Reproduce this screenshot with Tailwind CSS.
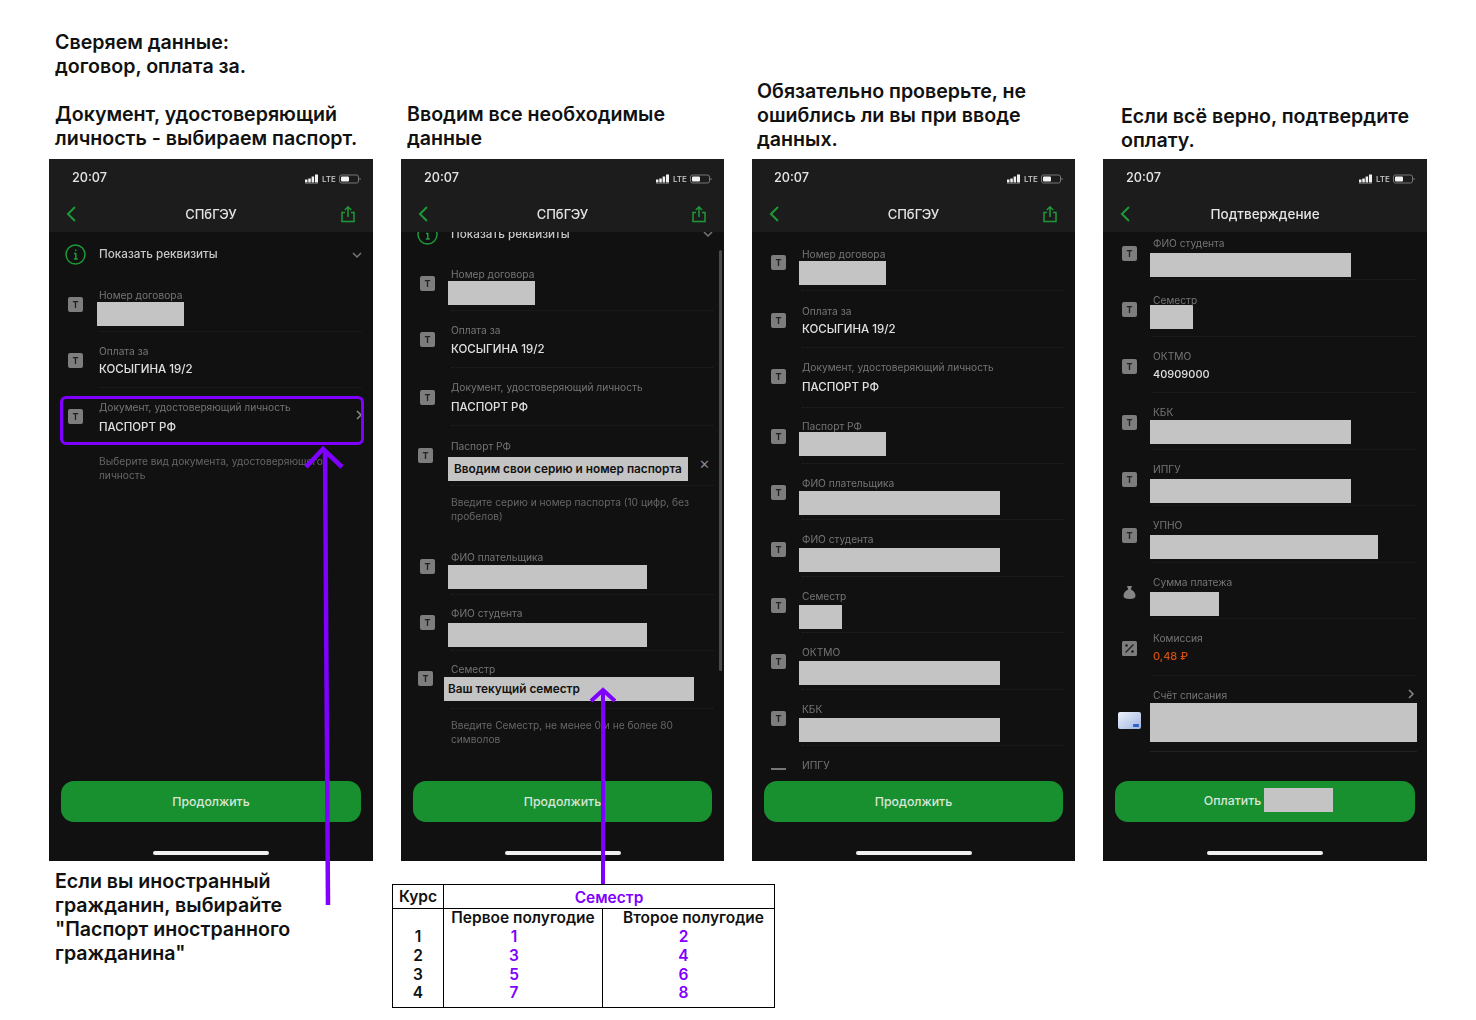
<!DOCTYPE html>
<html lang="ru"><head><meta charset="utf-8"><script src="https://cdn.jsdelivr.net/npm/@tailwindcss/browser@4"></script><title>Оплата</title></head>
<body class="bg-white">
<svg width="0" height="0" class="absolute">
<symbol id="signal" viewBox="0 0 13 10"><g fill="#f0f0f0"><rect x="0" y="5.500" width="2.500" height="3"/><rect x="3.300" y="4.500" width="2.500" height="4"/><rect x="6.600" y="2.500" width="2.500" height="6"/><rect x="10" y="0.500" width="3" height="8"/><rect x="0" y="9" width="13" height="1" opacity=".3"/></g></symbol>
<symbol id="battery" viewBox="0 0 22 10"><rect x="0.500" y="1" width="19" height="8" rx="2" fill="none" stroke="#777"/><rect x="2" y="2.500" width="8" height="5" rx="1" fill="#f2f2f2"/><rect x="20.500" y="4" width="1" height="2" fill="#777"/></symbol>
<symbol id="back" viewBox="0 0 12 18"><path d="M10 2 3 9l7 7" fill="none" stroke="#1d9a38" stroke-width="2"/></symbol>
<symbol id="share" viewBox="0 0 16 18"><path d="M8 12V2M4.800 5 8 1.800 11.200 5M5 7.500H2v9h12v-9h-3" fill="none" stroke="#1d9a38" stroke-width="1.500"/></symbol>
<symbol id="chev" viewBox="0 0 8 10"><path d="m2 1 4 4-4 4" fill="none" stroke="#8a8a8a" stroke-width="1.500"/></symbol>
</svg>
<div class="relative w-[1476px] h-[1020px] overflow-hidden bg-white font-['Inter',sans-serif]">
  <div class="flex gap-[28px] pl-[49px]">
    <!-- column 1 -->
    <div class="w-[324px]">
      <div class="h-[159px] flex flex-col justify-end pb-[9px] pl-[6px] text-[19.600px] leading-[24px] font-semibold text-[#111] whitespace-nowrap">
        <p>Сверяем данные:<br>договор, оплата за.</p><p class="mt-[24px]">Документ, удостоверяющий<br>личность - выбираем паспорт.</p>
      </div>
      <div class="h-[702px] w-[324px] flex flex-col bg-[#111112]">
        <div class="h-[73px] bg-[#1c1c1c] relative shrink-0 blur-[0.4px]">
          <span class="absolute left-[23px] top-[11px] text-[12.700px] leading-[16px] font-medium text-[#e4e4e4]">20:07</span>
          <div class="absolute left-[256px] top-[15px] flex items-center h-[10px]"><svg class="w-[13px] h-[10px]"><use href="#signal"/></svg><span class="ml-[4px] w-[17px] text-[8px] leading-[10px] font-medium text-[#cfcfcf]">LTE</span><svg class="w-[22px] h-[10px]"><use href="#battery"/></svg></div>
          <svg class="absolute left-[16px] top-[46px] w-[12px] h-[18px]"><use href="#back"/></svg>
          <div class="absolute inset-x-0 top-[47px] text-center text-[13px] leading-[16px] font-medium text-[#e4e4e4]">СПбГЭУ</div>
          <svg class="absolute left-[291px] top-[46px] w-[16px] h-[18px]"><use href="#share"/></svg>
        </div>
        <div class="flex-1 overflow-hidden">
          <div class="flex items-center h-[44px] pl-[16px] pt-[1px] pr-[11px] blur-[0.3px]">
            <svg class="w-[21px] h-[21px] shrink-0" viewBox="0 0 21 21"><circle cx="10.500" cy="10.500" r="9.500" fill="none" stroke="#1d9a38" stroke-width="1.500"/><path d="M10.700 5.500v1.500M9 9.500h1.800V15M8.800 15h4" fill="none" stroke="#1d9a38" stroke-width="1.500"/></svg>
            <span class="ml-[13px] flex-1 text-[11.700px] font-medium text-[#c8c8c8]">Показать реквизиты</span>
            <svg class="w-[10px] h-[8px]" viewBox="0 0 10 8"><path d="m1 2 4 4 4-4" fill="none" stroke="#777" stroke-width="1.500"/></svg>
          </div>
          <div class="flex h-[56px] items-center pl-[19px] pr-[11px]">
            <span class="w-[15px] h-[15px] rounded-[2px] bg-[#7d7d7d] shrink-0 text-center text-[9px] leading-[15px] font-bold text-[#222] blur-[0.3px]">T</span>
            <div class="ml-[16px] flex-1 self-stretch border-b border-dotted border-[#222] pt-[12.500px]"><p class="text-[10.200px] leading-[13px] text-[#757575] blur-[0.3px]">Номер договора</p><div class="-ml-[2px] w-[87px] h-6 bg-[#c4c4c4] mt-[0.500px]"></div></div>
          </div>
          <div class="flex h-[56px] items-center pl-[19px] pr-[11px]">
            <span class="w-[15px] h-[15px] rounded-[2px] bg-[#7d7d7d] shrink-0 text-center text-[9px] leading-[15px] font-bold text-[#222] blur-[0.3px]">T</span>
            <div class="ml-[16px] flex-1 self-stretch border-b border-dotted border-[#222] pt-[13px]"><p class="text-[10.200px] leading-[13px] text-[#757575] blur-[0.3px]">Оплата за</p><p class="mt-[4px] text-[11.500px] leading-[15px] font-medium text-[#e0e0e0] blur-[0.3px]">КОСЫГИНА 19/2</p></div>
          </div>
          <div class="flex h-[56px] items-center pl-[19px] pr-[11px]">
            <span class="w-[15px] h-[15px] rounded-[2px] bg-[#7d7d7d] shrink-0 text-center text-[9px] leading-[15px] font-bold text-[#222] blur-[0.3px]">T</span>
            <div class="ml-[16px] flex-1 self-stretch pt-[13px] relative"><p class="text-[10.200px] leading-[13px] text-[#757575] blur-[0.3px]">Документ, удостоверяющий личность</p><p class="mt-[6px] text-[11.500px] leading-[15px] font-medium text-[#e0e0e0] blur-[0.3px]">ПАСПОРТ РФ</p><svg class="absolute right-[-1px] top-[22px] w-[8px] h-[10px]"><use href="#chev"/></svg></div>
          </div>
          <p class="ml-[50px] mr-[11px] mt-[10px] text-[10.200px] leading-[14px] text-[#666] blur-[0.3px]">Выберите вид документа, удостоверяющего<br>личность</p>
        </div>
        <div class="h-[89px] shrink-0 pt-[9px] px-[12px]">
          <div class="h-[41px] rounded-[13px] bg-[#18902f] text-center text-[12.300px] leading-[41px] font-medium text-[#d8e6da]">Продолжить</div>
          <div class="mx-auto mt-[29px] w-[116px] h-[4px] rounded-full bg-[#f0f0f0]"></div>
        </div>
      </div>
      <div class="pt-[8px] pl-[6px] text-[19.600px] leading-[24px] font-semibold text-[#111] whitespace-nowrap"><p>Если вы иностранный<br>гражданин, выбирайте<br>"Паспорт иностранного<br>гражданина"</p></div>
    </div>
    <!-- column 2 -->
    <div class="w-[323px]">
      <div class="h-[159px] flex flex-col justify-end pb-[9px] pl-[6px] text-[19.600px] leading-[24px] font-semibold text-[#111] whitespace-nowrap"><p>Вводим все необходимые<br>данные</p></div>
      <div class="h-[702px] flex flex-col bg-[#111112] relative">
        <div class="h-[73px] bg-[#1c1c1c] relative shrink-0 z-10 blur-[0.4px]">
          <span class="absolute left-[23px] top-[11px] text-[12.700px] leading-[16px] font-medium text-[#e4e4e4]">20:07</span>
          <div class="absolute left-[255px] top-[15px] flex items-center h-[10px]"><svg class="w-[13px] h-[10px]"><use href="#signal"/></svg><span class="ml-[4px] w-[17px] text-[8px] leading-[10px] font-medium text-[#cfcfcf]">LTE</span><svg class="w-[22px] h-[10px]"><use href="#battery"/></svg></div>
          <svg class="absolute left-[16px] top-[46px] w-[12px] h-[18px]"><use href="#back"/></svg>
          <div class="absolute inset-x-0 top-[47px] text-center text-[13px] leading-[16px] font-medium text-[#e4e4e4]">СПбГЭУ</div>
          <svg class="absolute left-[290px] top-[46px] w-[16px] h-[18px]"><use href="#share"/></svg>
        </div>
        <div class="flex-1 overflow-hidden relative">
          <div class="absolute right-[2px] top-[18px] w-[3px] h-[421px] rounded-full bg-[#4a4a4a]"></div>
          <div class="flex items-center h-[43px] mt-[-20px] pl-[16px] pt-[1px] pr-[11px] blur-[0.3px]">
            <svg class="w-[21px] h-[21px] shrink-0" viewBox="0 0 21 21"><circle cx="10.500" cy="10.500" r="9.500" fill="none" stroke="#1d9a38" stroke-width="1.500"/><path d="M10.700 5.500v1.500M9 9.500h1.800V15M8.800 15h4" fill="none" stroke="#1d9a38" stroke-width="1.500"/></svg>
            <span class="ml-[13px] flex-1 text-[11.700px] leading-[16px] font-medium text-[#c8c8c8]">Показать реквизиты</span>
            <svg class="w-[10px] h-[8px]" viewBox="0 0 10 8"><path d="m1 2 4 4 4-4" fill="none" stroke="#777" stroke-width="1.500"/></svg>
          </div>
          <div class="flex h-[56px] items-center pl-[19px] pr-[11px]">
            <span class="w-[15px] h-[15px] rounded-[2px] bg-[#7d7d7d] shrink-0 text-center text-[9px] leading-[15px] font-bold text-[#222] blur-[0.3px]">T</span>
            <div class="ml-[16px] flex-1 self-stretch border-b border-dotted border-[#222] pt-[12.500px]"><p class="text-[10.200px] leading-[13px] text-[#757575] blur-[0.3px]">Номер договора</p><div class="-ml-[3px] w-[87px] h-6 bg-[#c4c4c4] mt-[0.500px]"></div></div>
          </div>
          <div class="flex h-[57px] items-center pl-[19px] pr-[11px]">
            <span class="w-[15px] h-[15px] rounded-[2px] bg-[#7d7d7d] shrink-0 text-center text-[9px] leading-[15px] font-bold text-[#222] blur-[0.3px]">T</span>
            <div class="ml-[16px] flex-1 self-stretch border-b border-dotted border-[#222] pt-[13px]"><p class="text-[10.200px] leading-[13px] text-[#757575] blur-[0.3px]">Оплата за</p><p class="mt-[5px] text-[11.500px] leading-[15px] font-medium text-[#e0e0e0] blur-[0.3px]">КОСЫГИНА 19/2</p></div>
          </div>
          <div class="flex h-[58px] items-center pl-[19px] pr-[11px]">
            <span class="w-[15px] h-[15px] rounded-[2px] bg-[#7d7d7d] shrink-0 text-center text-[9px] leading-[15px] font-bold text-[#222] blur-[0.3px]">T</span>
            <div class="ml-[16px] flex-1 self-stretch border-b border-dotted border-[#222] pt-[13px]"><p class="text-[10.200px] leading-[13px] text-[#757575] blur-[0.3px]">Документ, удостоверяющий личность</p><p class="mt-[6px] text-[11.500px] leading-[15px] font-medium text-[#e0e0e0] blur-[0.3px]">ПАСПОРТ РФ</p></div>
          </div>
          <div class="flex h-[60px] pl-[17px] pr-[11px]">
            <span class="mt-[22px] w-[15px] h-[15px] rounded-[2px] bg-[#7d7d7d] shrink-0 text-center text-[9px] leading-[15px] font-bold text-[#222] blur-[0.3px]">T</span>
            <div class="ml-[18px] flex-1 self-stretch border-b border-dotted border-[#222] pt-[14px] relative"><p class="text-[10.200px] leading-[13px] text-[#757575] blur-[0.3px]">Паспорт РФ</p><div class="-ml-[3px] mt-[4px] w-[240px] h-6 bg-[#c4c4c4] pl-[6px] text-[11.800px] leading-[24px] font-semibold text-[#111]">Вводим свои серию и номер паспорта</div><span class="absolute right-[3px] top-[31px] text-[13px] leading-[15px] text-[#888]">✕</span></div>
          </div>
          <p class="ml-[50px] mr-[20px] mt-[9px] h-[43px] text-[10.200px] leading-[14px] text-[#666] blur-[0.3px]">Введите серию и номер паспорта (10 цифр, без<br>пробелов)</p>
          <div class="flex h-[57px] items-center pl-[19px] pr-[11px]">
            <span class="w-[15px] h-[15px] rounded-[2px] bg-[#7d7d7d] shrink-0 text-center text-[9px] leading-[15px] font-bold text-[#222] blur-[0.3px]">T</span>
            <div class="ml-[16px] flex-1 self-stretch border-b border-dotted border-[#222] pt-[13px]"><p class="text-[10.200px] leading-[13px] text-[#757575] blur-[0.3px]">ФИО плательщика</p><div class="-ml-[3px] w-[199px] h-6 bg-[#c4c4c4] mt-[1px]"></div></div>
          </div>
          <div class="flex h-[56px] items-center pl-[19px] pr-[11px]">
            <span class="-mt-[2px] w-[15px] h-[15px] rounded-[2px] bg-[#7d7d7d] shrink-0 text-center text-[9px] leading-[15px] font-bold text-[#222] blur-[0.3px]">T</span>
            <div class="ml-[16px] flex-1 self-stretch border-b border-dotted border-[#222] pt-[12px]"><p class="text-[10.200px] leading-[13px] text-[#757575] blur-[0.3px]">ФИО студента</p><div class="-ml-[3px] w-[199px] h-6 bg-[#c4c4c4] mt-[3px]"></div></div>
          </div>
          <div class="flex h-[58px] pl-[17px] pr-[11px]">
            <span class="mt-[20px] w-[15px] h-[15px] rounded-[2px] bg-[#7d7d7d] shrink-0 text-center text-[9px] leading-[15px] font-bold text-[#222] blur-[0.3px]">T</span>
            <div class="ml-[18px] flex-1 self-stretch border-b border-dotted border-[#222] pt-[12px]"><p class="text-[10.200px] leading-[13px] text-[#757575] blur-[0.3px]">Семестр</p><div class="-ml-[7px] w-[250px] h-6 bg-[#c4c4c4] mt-[1px] pl-[4px] text-[11.800px] leading-[24px] font-semibold text-[#111]">Ваш текущий семестр</div></div>
          </div>
          <p class="ml-[50px] mr-[20px] mt-[9px] text-[10.200px] leading-[14px] text-[#666] blur-[0.3px]">Введите Семестр, не менее 0 и не более 80<br>символов</p>
        </div>
        <div class="h-[89px] shrink-0 pt-[9px] px-[12px]">
          <div class="h-[41px] rounded-[13px] bg-[#18902f] text-center text-[12.300px] leading-[41px] font-medium text-[#d8e6da]">Продолжить</div>
          <div class="mx-auto mt-[29px] w-[116px] h-[4px] rounded-full bg-[#f0f0f0]"></div>
        </div>
      </div>
      <!-- semester table -->
      <table class="ml-[-9px] mt-[23px] w-[382px] border-collapse border-[1.500px] border-black table-fixed text-[15.500px] leading-[18px] font-semibold text-[#111] whitespace-nowrap">
        <colgroup><col class="w-[51px]"><col class="w-[159px]"><col class="w-[172px]"></colgroup>
        <tbody class="text-center">
          <tr class="h-[24px]"><td class="border-r-[1.500px] border-b-[1.500px] border-black">Курс</td><td colspan="2" class="border-b-[1.500px] border-black pt-[2px] text-[#7f00ff]">Семестр</td></tr>
          <tr class="h-[18px]"><td class="border-r-[1.500px] border-black"></td><td class="border-r-[1.500px] border-black">Первое полугодие</td><td class="pl-[10px]">Второе полугодие</td></tr>
          <tr class="h-[19px]"><td class="border-r-[1.500px] border-black">1</td><td class="border-r-[1.500px] border-black pr-[18px] text-[#7f00ff]">1</td><td class="pr-[10px] text-[#7f00ff]">2</td></tr>
          <tr class="h-[19px]"><td class="border-r-[1.500px] border-black">2</td><td class="border-r-[1.500px] border-black pr-[18px] text-[#7f00ff]">3</td><td class="pr-[10px] text-[#7f00ff]">4</td></tr>
          <tr class="h-[19px]"><td class="border-r-[1.500px] border-black">3</td><td class="border-r-[1.500px] border-black pr-[18px] text-[#7f00ff]">5</td><td class="pr-[10px] text-[#7f00ff]">6</td></tr>
          <tr class="h-[23px] align-top"><td class="border-r-[1.500px] border-black">4</td><td class="border-r-[1.500px] border-black pr-[18px] text-[#7f00ff]">7</td><td class="pr-[10px] text-[#7f00ff]">8</td></tr>
        </tbody>
      </table>
    </div>
    <!-- column 3 -->
    <div class="w-[323px]">
      <div class="h-[159px] flex flex-col justify-end pb-[8px] pl-[5px] text-[19.600px] leading-[24px] font-semibold text-[#111] whitespace-nowrap"><p>Обязательно проверьте, не<br>ошиблись ли вы при вводе<br>данных.</p></div>
      <div class="h-[702px] flex flex-col bg-[#111112]">
        <div class="h-[73px] bg-[#1c1c1c] relative shrink-0 blur-[0.4px]">
          <span class="absolute left-[22px] top-[11px] text-[12.700px] leading-[16px] font-medium text-[#e4e4e4]">20:07</span>
          <div class="absolute left-[255px] top-[15px] flex items-center h-[10px]"><svg class="w-[13px] h-[10px]"><use href="#signal"/></svg><span class="ml-[4px] w-[17px] text-[8px] leading-[10px] font-medium text-[#cfcfcf]">LTE</span><svg class="w-[22px] h-[10px]"><use href="#battery"/></svg></div>
          <svg class="absolute left-[16px] top-[46px] w-[12px] h-[18px]"><use href="#back"/></svg>
          <div class="absolute inset-x-0 top-[47px] text-center text-[13px] leading-[16px] font-medium text-[#e4e4e4]">СПбГЭУ</div>
          <svg class="absolute left-[290px] top-[46px] w-[16px] h-[18px]"><use href="#share"/></svg>
        </div>
        <div class="flex-1 overflow-hidden">
          <div class="flex h-[57px] items-center pl-[19px] pr-[11px] mt-[2px]">
            <span class="w-[15px] h-[15px] rounded-[2px] bg-[#7d7d7d] shrink-0 text-center text-[9px] leading-[15px] font-bold text-[#222] blur-[0.3px]">T</span>
            <div class="ml-[16px] flex-1 self-stretch border-b border-dotted border-[#222] pt-[14px]"><p class="text-[10.200px] leading-[13px] text-[#757575] blur-[0.3px]">Номер договора</p><div class="-ml-[3px] w-[87px] h-6 bg-[#c4c4c4]"></div></div>
          </div>
          <div class="flex h-[57px] items-center pl-[19px] pr-[11px]">
            <span class="mt-[2px] w-[15px] h-[15px] rounded-[2px] bg-[#7d7d7d] shrink-0 text-center text-[9px] leading-[15px] font-bold text-[#222] blur-[0.3px]">T</span>
            <div class="ml-[16px] flex-1 self-stretch border-b border-dotted border-[#222] pt-[14px]"><p class="text-[10.200px] leading-[13px] text-[#757575] blur-[0.3px]">Оплата за</p><p class="mt-[4px] text-[11.500px] leading-[15px] font-medium text-[#e0e0e0] blur-[0.3px]">КОСЫГИНА 19/2</p></div>
          </div>
          <div class="flex h-[60px] items-center pl-[19px] pr-[11px]">
            <span class="-mt-[4px] w-[15px] h-[15px] rounded-[2px] bg-[#7d7d7d] shrink-0 text-center text-[9px] leading-[15px] font-bold text-[#222] blur-[0.3px]">T</span>
            <div class="ml-[16px] flex-1 self-stretch border-b border-dotted border-[#222] pt-[13px]"><p class="text-[10.200px] leading-[13px] text-[#757575] blur-[0.3px]">Документ, удостоверяющий личность</p><p class="mt-[6px] text-[11.500px] leading-[15px] font-medium text-[#e0e0e0] blur-[0.3px]">ПАСПОРТ РФ</p></div>
          </div>
          <div class="flex h-[56px] items-center pl-[19px] pr-[11px]">
            <span class="w-[15px] h-[15px] rounded-[2px] bg-[#7d7d7d] shrink-0 text-center text-[9px] leading-[15px] font-bold text-[#222] blur-[0.3px]">T</span>
            <div class="ml-[16px] flex-1 self-stretch border-b border-dotted border-[#222] pt-[12px]"><p class="text-[10.200px] leading-[13px] text-[#757575] blur-[0.3px]">Паспорт РФ</p><div class="-ml-[3px] w-[87px] h-6 bg-[#c4c4c4] -mt-[1px]"></div></div>
          </div>
          <div class="flex h-[56px] items-center pl-[19px] pr-[11px]">
            <span class="w-[15px] h-[15px] rounded-[2px] bg-[#7d7d7d] shrink-0 text-center text-[9px] leading-[15px] font-bold text-[#222] blur-[0.3px]">T</span>
            <div class="ml-[16px] flex-1 self-stretch border-b border-dotted border-[#222] pt-[13px]"><p class="text-[10.200px] leading-[13px] text-[#757575] blur-[0.3px]">ФИО плательщика</p><div class="-ml-[3px] w-[201px] h-6 bg-[#c4c4c4] mt-[1px]"></div></div>
          </div>
          <div class="flex h-[57px] items-center pl-[19px] pr-[11px]">
            <span class="mt-[2px] w-[15px] h-[15px] rounded-[2px] bg-[#7d7d7d] shrink-0 text-center text-[9px] leading-[15px] font-bold text-[#222] blur-[0.3px]">T</span>
            <div class="ml-[16px] flex-1 self-stretch border-b border-dotted border-[#222] pt-[13px]"><p class="text-[10.200px] leading-[13px] text-[#757575] blur-[0.3px]">ФИО студента</p><div class="-ml-[3px] w-[201px] h-6 bg-[#c4c4c4] mt-[2px]"></div></div>
          </div>
          <div class="flex h-[56px] items-center pl-[19px] pr-[11px]">
            <span class="w-[15px] h-[15px] rounded-[2px] bg-[#7d7d7d] shrink-0 text-center text-[9px] leading-[15px] font-bold text-[#222] blur-[0.3px]">T</span>
            <div class="ml-[16px] flex-1 self-stretch border-b border-dotted border-[#222] pt-[13px]"><p class="text-[10.200px] leading-[13px] text-[#757575] blur-[0.3px]">Семестр</p><div class="-ml-[3px] w-[43px] h-6 bg-[#c4c4c4] mt-[2px]"></div></div>
          </div>
          <div class="flex h-[57px] items-center pl-[19px] pr-[11px]">
            <span class="w-[15px] h-[15px] rounded-[2px] bg-[#7d7d7d] shrink-0 text-center text-[9px] leading-[15px] font-bold text-[#222] blur-[0.3px]">T</span>
            <div class="ml-[16px] flex-1 self-stretch border-b border-dotted border-[#222] pt-[13px]"><p class="text-[10.200px] leading-[13px] text-[#757575] blur-[0.3px]">ОКТМО</p><div class="-ml-[3px] w-[201px] h-6 bg-[#c4c4c4] mt-[2px]"></div></div>
          </div>
          <div class="flex h-[56px] items-center pl-[19px] pr-[11px]">
            <span class="w-[15px] h-[15px] rounded-[2px] bg-[#7d7d7d] shrink-0 text-center text-[9px] leading-[15px] font-bold text-[#222] blur-[0.3px]">T</span>
            <div class="ml-[16px] flex-1 self-stretch border-b border-dotted border-[#222] pt-[13px]"><p class="text-[10.200px] leading-[13px] text-[#757575] blur-[0.3px]">КБК</p><div class="-ml-[3px] w-[201px] h-6 bg-[#c4c4c4] mt-[2px]"></div></div>
          </div>
          <div class="flex h-[30px] pl-[19px] pr-[11px]">
            <span class="mt-[22px] w-[15px] h-[2px] bg-[#777] shrink-0 blur-[0.3px]"></span>
            <div class="ml-[16px] flex-1 pt-[13px]"><p class="text-[10.200px] leading-[13px] text-[#757575] blur-[0.3px]">ИПГУ</p></div>
          </div>
        </div>
        <div class="h-[89px] shrink-0 pt-[9px] px-[12px] bg-[#111112]">
          <div class="h-[41px] rounded-[13px] bg-[#18902f] text-center text-[12.300px] leading-[41px] font-medium text-[#d8e6da]">Продолжить</div>
          <div class="mx-auto mt-[29px] w-[116px] h-[4px] rounded-full bg-[#f0f0f0]"></div>
        </div>
      </div>
    </div>
    <!-- column 4 -->
    <div class="w-[324px]">
      <div class="h-[159px] flex flex-col justify-end pb-[7px] pl-[18px] text-[19.600px] leading-[24px] font-semibold text-[#111] whitespace-nowrap"><p>Если всё верно, подтвердите<br>оплату.</p></div>
      <div class="h-[702px] flex flex-col bg-[#111112]">
        <div class="h-[73px] bg-[#1c1c1c] relative shrink-0 z-10 blur-[0.4px]">
          <span class="absolute left-[23px] top-[11px] text-[12.700px] leading-[16px] font-medium text-[#e4e4e4]">20:07</span>
          <div class="absolute left-[256px] top-[15px] flex items-center h-[10px]"><svg class="w-[13px] h-[10px]"><use href="#signal"/></svg><span class="ml-[4px] w-[17px] text-[8px] leading-[10px] font-medium text-[#cfcfcf]">LTE</span><svg class="w-[22px] h-[10px]"><use href="#battery"/></svg></div>
          <svg class="absolute left-[16px] top-[46px] w-[12px] h-[18px]"><use href="#back"/></svg>
          <div class="absolute inset-x-0 top-[47px] text-center text-[13.500px] leading-[16px] font-medium text-[#e4e4e4]">Подтверждение</div>
        </div>
        <div class="flex-1 overflow-hidden">
          <div class="flex h-[56px] items-center pl-[19px] pr-[11px] mt-[-8px]">
            <span class="mt-[3px] w-[15px] h-[15px] rounded-[2px] bg-[#7d7d7d] shrink-0 text-center text-[9px] leading-[15px] font-bold text-[#222] blur-[0.3px]">T</span>
            <div class="ml-[16px] flex-1 self-stretch border-b border-dotted border-[#222] pt-[13px]"><p class="text-[10.200px] leading-[13px] text-[#757575] blur-[0.3px]">ФИО студента</p><div class="-ml-[3px] w-[201px] h-6 bg-[#c4c4c4] mt-[3px]"></div></div>
          </div>
          <div class="flex h-[57px] items-center pl-[19px] pr-[11px]">
            <span class="mt-[2px] w-[15px] h-[15px] rounded-[2px] bg-[#7d7d7d] shrink-0 text-center text-[9px] leading-[15px] font-bold text-[#222] blur-[0.3px]">T</span>
            <div class="ml-[16px] flex-1 self-stretch border-b border-dotted border-[#222] pt-[14px]"><p class="text-[10.200px] leading-[13px] text-[#757575] blur-[0.3px]">Семестр</p><div class="-ml-[3px] w-[43px] h-6 bg-[#c4c4c4] -mt-[2px]"></div></div>
          </div>
          <div class="flex h-[56px] items-center pl-[19px] pr-[11px]">
            <span class="mt-[3px] w-[15px] h-[15px] rounded-[2px] bg-[#7d7d7d] shrink-0 text-center text-[9px] leading-[15px] font-bold text-[#222] blur-[0.3px]">T</span>
            <div class="ml-[16px] flex-1 self-stretch border-b border-dotted border-[#222] pt-[13px]"><p class="text-[10.200px] leading-[13px] text-[#757575] blur-[0.3px]">ОКТМО</p><p class="mt-[4px] text-[11px] leading-[15px] font-medium text-[#e0e0e0] blur-[0.3px]">40909000</p></div>
          </div>
          <div class="flex h-[57px] items-center pl-[19px] pr-[11px]">
            <span class="mt-[2px] w-[15px] h-[15px] rounded-[2px] bg-[#7d7d7d] shrink-0 text-center text-[9px] leading-[15px] font-bold text-[#222] blur-[0.3px]">T</span>
            <div class="ml-[16px] flex-1 self-stretch border-b border-dotted border-[#222] pt-[13px]"><p class="text-[10.200px] leading-[13px] text-[#757575] blur-[0.3px]">КБК</p><div class="-ml-[3px] w-[201px] h-6 bg-[#c4c4c4] mt-[1px]"></div></div>
          </div>
          <div class="flex h-[56px] items-center pl-[19px] pr-[11px]">
            <span class="mt-[3px] w-[15px] h-[15px] rounded-[2px] bg-[#7d7d7d] shrink-0 text-center text-[9px] leading-[15px] font-bold text-[#222] blur-[0.3px]">T</span>
            <div class="ml-[16px] flex-1 self-stretch border-b border-dotted border-[#222] pt-[13px]"><p class="text-[10.200px] leading-[13px] text-[#757575] blur-[0.3px]">ИПГУ</p><div class="-ml-[3px] w-[201px] h-6 bg-[#c4c4c4] mt-[3px]"></div></div>
          </div>
          <div class="flex h-[57px] items-center pl-[19px] pr-[11px]">
            <span class="mt-[2px] w-[15px] h-[15px] rounded-[2px] bg-[#7d7d7d] shrink-0 text-center text-[9px] leading-[15px] font-bold text-[#222] blur-[0.3px]">T</span>
            <div class="ml-[16px] flex-1 self-stretch border-b border-dotted border-[#222] pt-[13px]"><p class="text-[10.200px] leading-[13px] text-[#757575] blur-[0.3px]">УПНО</p><div class="-ml-[3px] w-[228px] h-6 bg-[#c4c4c4] mt-[3px]"></div></div>
          </div>
          <div class="flex h-[56px] items-center pl-[19px] pr-[11px]">
            <svg class="mt-[3px] w-[15px] h-[15px] shrink-0" viewBox="0 0 15 15"><path d="M5 1h5L8.800 4.500c2.700 1 4.700 3.500 4.700 6.300 0 2.300-2 3.200-6 3.200s-6-.9-6-3.200c0-2.800 2-5.300 4.700-6.300z" fill="#858585"/></svg>
            <div class="ml-[16px] flex-1 self-stretch border-b border-dotted border-[#222] pt-[13px]"><p class="text-[10.200px] leading-[13px] text-[#757575] blur-[0.3px]">Сумма платежа</p><div class="-ml-[3px] w-[69px] h-6 bg-[#c4c4c4] mt-[3px]"></div></div>
          </div>
          <div class="flex h-[57px] items-center pl-[19px] pr-[11px]">
            <svg class="mt-[2px] w-[15px] h-[15px] shrink-0" viewBox="0 0 15 15"><rect width="15" height="15" rx="1.500" fill="#7d7d7d"/><path d="m3.500 11.500 8-8" stroke="#1c1c1c" stroke-width="1.300"/><circle cx="4.500" cy="4.500" r="1.300" fill="#1c1c1c"/><circle cx="10.500" cy="10.500" r="1.300" fill="#1c1c1c"/></svg>
            <div class="ml-[16px] flex-1 self-stretch border-b border-dotted border-[#222] pt-[13px]"><p class="text-[10.200px] leading-[13px] text-[#757575] blur-[0.3px]">Комиссия</p><p class="mt-[4px] text-[11px] leading-[15px] font-medium text-[#d2500f] blur-[0.3px]">0,48 ₽</p></div>
          </div>
          <div class="flex h-[76px] pl-[15px] pr-[10px]">
            <div class="mt-[36px] w-[23px] h-[17px] rounded-[2px] bg-gradient-to-br from-[#eef2fb] to-[#9fb5e0] relative shrink-0"><span class="absolute right-[2px] bottom-[2px] w-[6px] h-[3px] rounded-[1px] bg-[#2f62c8]"></span></div>
            <div class="ml-[9px] flex-1 pt-[13px] relative border-b border-[#222]"><p class="pl-[3px] text-[10.200px] leading-[13px] text-[#757575] blur-[0.3px]">Счёт списания</p><svg class="absolute right-[2px] top-[13px] w-[8px] h-[10px]"><use href="#chev"/></svg><div class="w-[267px] h-[39px] bg-[#c4c4c4] mt-[1px]"></div></div>
          </div>
        </div>
        <div class="h-[89px] shrink-0 pt-[9px] px-[12px]">
          <div class="h-[41px] rounded-[13px] bg-[#18902f] flex items-center justify-center pl-[7px] text-[12.300px] font-medium text-[#d8e6da]"><span>Оплатить</span><span class="ml-[3px] mb-[4px] w-[69px] h-6 bg-[#c4c4c4]"></span></div>
          <div class="mx-auto mt-[29px] w-[116px] h-[4px] rounded-full bg-[#f0f0f0]"></div>
        </div>
      </div>
    </div>
  </div>
  <!-- annotations over the screenshots -->
  <div class="absolute left-[60px] top-[396px] w-[304px] h-[49px] rounded-[6px] border-[3px] border-[#7f00ff]"></div>
  <svg class="absolute inset-0 pointer-events-none" width="1476" height="1020" fill="none" stroke="#7f00ff" stroke-width="4.500">
    <path d="M328 905 325 450M306 467l17-18 19 18"/>
    <path d="M603 884V692M591 701l12-11 12 11" stroke-width="4"/>
  </svg>
</div>
</body></html>
